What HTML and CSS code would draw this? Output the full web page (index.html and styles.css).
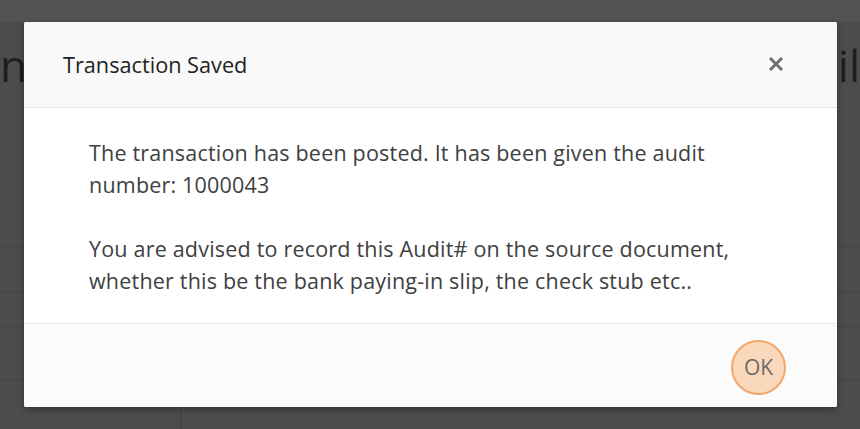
FILE: index.html
```html
<!DOCTYPE html>
<html lang="en">
<head>
<meta charset="utf-8">
<title>Transaction Saved</title>
<link rel="stylesheet" href="styles.css">
</head>
<body>
<div class="page" aria-hidden="true">
  <div class="topbar"></div>
  <div class="title-row">
    <span class="bg-title left">n</span>
    <span class="bg-title right">il</span>
  </div>
  <div class="rows">
    <div class="row r1"></div>
    <div class="row r2"></div>
    <div class="row r3"></div>
    <div class="row r4"></div>
  </div>
  <div class="bottom-cols">
    <div class="col"></div>
  </div>
</div>

<div class="modal" role="dialog" aria-labelledby="mtitle">
  <div class="modal-header">
    <h4 class="modal-title" id="mtitle">Transaction Saved</h4>
    <button class="close" type="button" aria-label="Close">
      <svg width="14" height="14" viewBox="0 0 14 14" aria-hidden="true">
        <path d="M2 2 L12 12 M12 2 L2 12" stroke="#707070" stroke-width="3" stroke-linecap="square" fill="none"/>
      </svg>
    </button>
  </div>
  <div class="modal-body">
    <p>The transaction has been posted. It has been given the audit number: 1000043</p>
    <p>You are advised to record this Audit# on the source document, whether this be the bank paying-in slip, the check stub etc..</p>
  </div>
  <div class="modal-footer">
    <button class="btn-ok" type="button">OK</button>
  </div>
</div>
</body>
</html>
```

FILE: styles.css
```css
* { box-sizing: border-box; }
html, body { margin: 0; padding: 0; }
body {
  width: 860px;
  height: 429px;
  overflow: hidden;
  background: #4c4c4c;
  font-family: "Open Sans", "Liberation Sans", sans-serif;
  position: relative;
}
.page { display: flex; flex-direction: column; height: 429px; }
.topbar { height: 22px; background: #535353; flex: none; }
.title-row {
  height: 82px;
  display: flex;
  justify-content: space-between;
  align-items: center;
  flex: none;
  padding-top: 4px;
}
.bg-title {
  font-size: 44px;
  color: #1e1e1e;
  line-height: 1;
}
.bg-title.left { margin-left: 0; }
.bg-title.right { margin-right: 0; }
.rows { display: flex; flex-direction: column; flex: 1; padding-top: 142px; }
.row { border-top: 1px solid #434343; }
.r1 { height: 46px; }
.r2 { height: 34px; }
.r3 { height: 53px; }
.r4 { height: 20px; }
.bottom-cols { height: 22px; display: flex; flex: none; }
.bottom-cols .col { width: 181px; border-right: 1px solid #3f3f3f; }

.modal {
  position: absolute;
  left: 24px;
  top: 22px;
  width: 813px;
  height: 385px;
  background: #fff;
  border-radius: 2px;
  box-shadow: 0 2px 6px rgba(0,0,0,0.35);
  display: flex;
  flex-direction: column;
  overflow: hidden;
}
.modal-header {
  height: 86px;
  flex: none;
  background: #f9f9f9;
  border-bottom: 1px solid #e6e6e6;
  display: flex;
  align-items: center;
  justify-content: space-between;
  padding: 0 54px 0 39px;
}
.modal-title {
  margin: 0;
  font-size: 21.7px;
  font-weight: 400;
  color: #222;
}
.close {
  border: 0;
  background: none;
  padding: 0;
  width: 14px;
  height: 14px;
  display: flex;
  margin-top: -2px;
  cursor: pointer;
}
.modal-body {
  height: 216px;
  flex: none;
  padding: 29px 50px 0 65px;
  border-bottom: 1px solid #eaeaea;
}
.modal-body p {
  margin: 0 0 32px;
  font-size: 21.5px;
  line-height: 32px;
  letter-spacing: 0.2px;
  color: #404040;
}
.modal-footer {
  flex: 1;
  background: #fbfbfb;
  display: flex;
  align-items: center;
  justify-content: flex-end;
  padding: 0 51px 0 0;
}
.btn-ok {
  width: 55px;
  height: 55px;
  border-radius: 50%;
  border: 2px solid #f3a66a;
  background: #fad8bb;
  color: #6a6a6a;
  font-family: "Open Sans", "Liberation Sans", sans-serif;
  font-size: 21px;
  padding: 0;
  margin-top: 3px;
  cursor: pointer;
}
```
